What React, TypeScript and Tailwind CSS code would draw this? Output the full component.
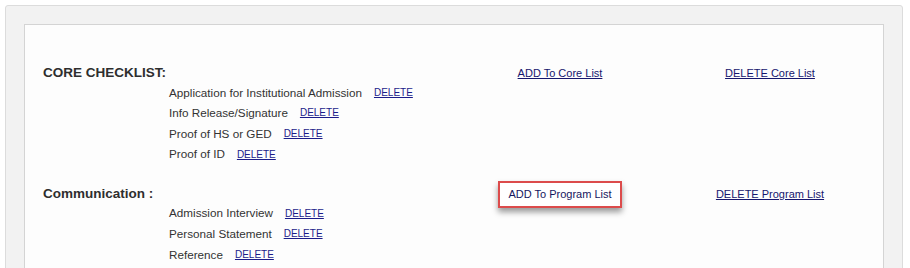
const font = { fontFamily: '"Liberation Sans", Arial, sans-serif' };

type Section = {
  title: string;
  items: string[];
  addLabel: string;
  deleteLabel: string;
  highlightAdd?: boolean;
};

const sections: Section[] = [
  {
    title: "CORE CHECKLIST:",
    items: [
      "Application for Institutional Admission",
      "Info Release/Signature",
      "Proof of HS or GED",
      "Proof of ID",
    ],
    addLabel: "ADD To Core List",
    deleteLabel: "DELETE Core List",
  },
  {
    title: "Communication :",
    items: ["Admission Interview", "Personal Statement", "Reference"],
    addLabel: "ADD To Program List",
    deleteLabel: "DELETE Program List",
    highlightAdd: true,
  },
];

function ChecklistSection({ section }: { section: Section }) {
  return (
    <div>
      {/* heading row with the two list actions */}
      <div className="grid grid-cols-[1fr_230px_190px] items-center h-[20px]">
        <div className="text-[13.5px] font-bold text-[#2e2e2e]">{section.title}</div>
        <div className="flex justify-center">
          {section.highlightAdd ? (
            <a
              href="#"
              className="-my-[3px] px-[8px] py-[2px] leading-[19px] border-2 border-[#dc4b4b] bg-white text-[11px] text-[#16165e] shadow-[0_4px_6px_rgba(0,0,0,0.4)]"
            >
              {section.addLabel}
            </a>
          ) : (
            <a href="#" className="text-[11px] text-[#16166e] underline">
              {section.addLabel}
            </a>
          )}
        </div>
        <div className="flex justify-center">
          <a href="#" className="text-[11px] text-[#16166e] underline">
            {section.deleteLabel}
          </a>
        </div>
      </div>

      {/* items */}
      <ul className="pl-[126px] -mt-[1px]">
        {section.items.map((item) => (
          <li key={item} className="flex items-center h-[20.6px] text-[11.7px] text-[#333]">
            <span>{item}</span>
            <a href="#" className="ml-[12px] text-[10px] text-[#1c1c8a] underline">
              DELETE
            </a>
          </li>
        ))}
      </ul>
    </div>
  );
}

export default function App() {
  return (
    <div className="bg-white p-[5px] pb-0 w-[910px] h-[268px] overflow-hidden" style={font}>
      <div className="bg-[#f2f2f2] border border-[#dcdcdc] rounded-[3px] pt-[18px] px-[18px] w-[898px] h-[300px]">
        <div className="bg-[#fdfdfd] border border-[#d4d4d4] pt-[38px] px-[18px] pb-[40px]">
          <div className="flex flex-col gap-[19.5px]">
            {sections.map((s) => (
              <ChecklistSection key={s.title} section={s} />
            ))}
          </div>
        </div>
      </div>
    </div>
  );
}
